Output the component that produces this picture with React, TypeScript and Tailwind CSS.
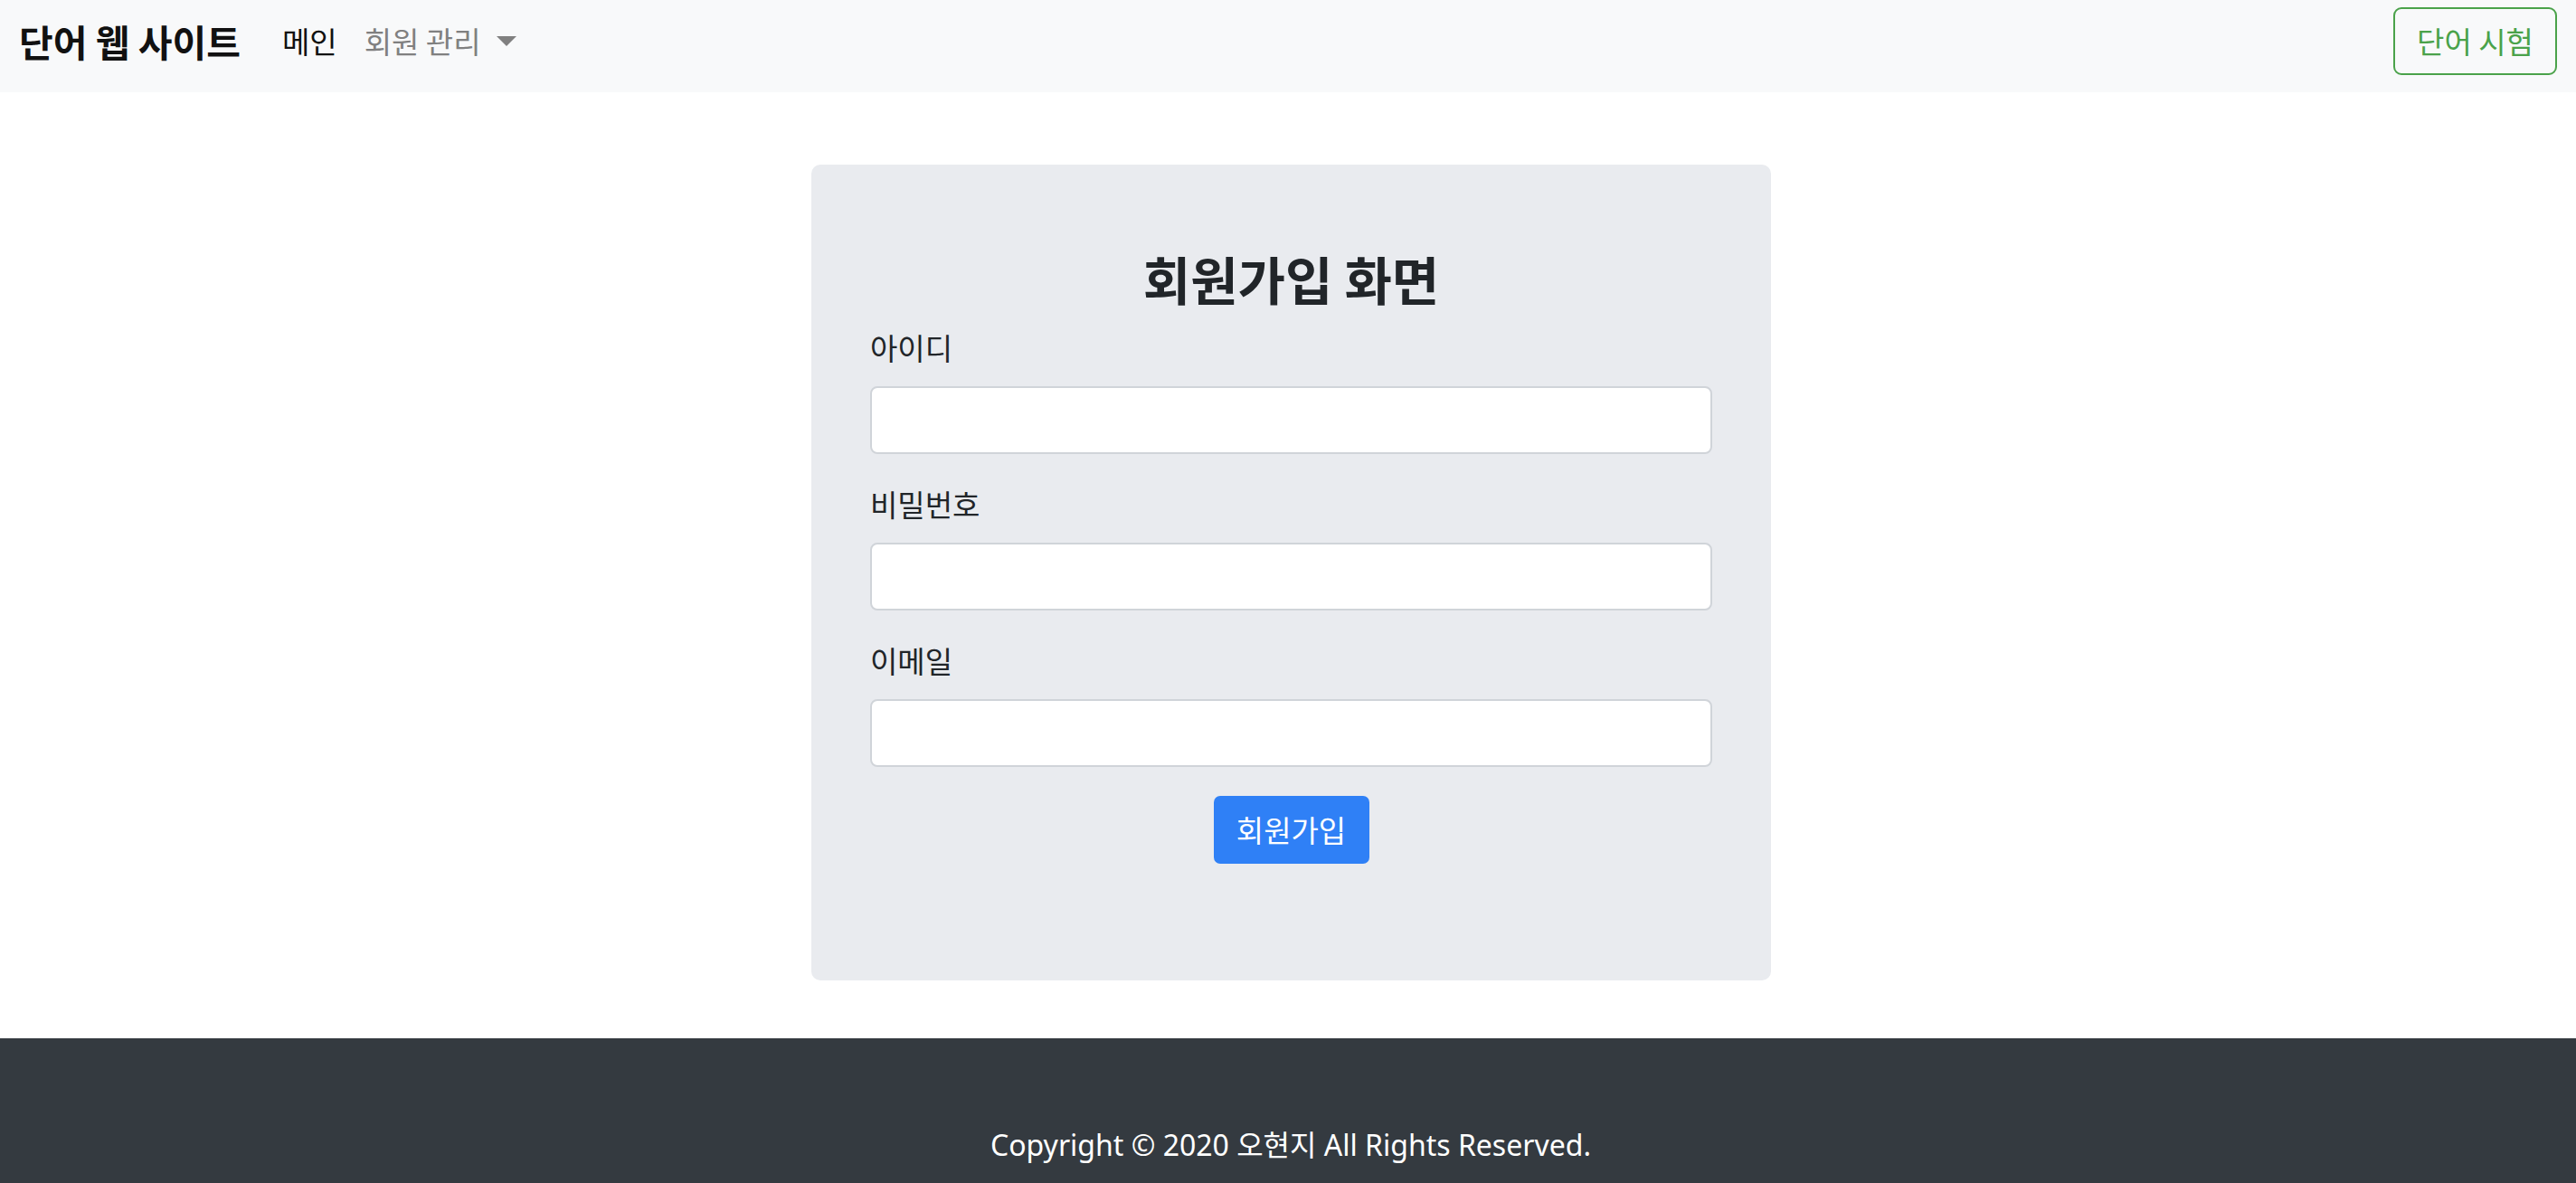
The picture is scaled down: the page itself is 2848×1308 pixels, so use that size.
import React from "react";

const KR = "font-['Noto_Sans_CJK_KR','Noto_Sans',sans-serif]";

function Field({ label, type, last }: { label: string; type: string; last?: boolean }) {
  return (
    <div className={last ? "" : "mb-[34px]"}>
      <label className="mb-[21px] block text-[33px] leading-[43px] text-[#212529]">{label}</label>
      <input
        type={type}
        className="block h-[75px] w-full rounded-[8px] border-2 border-[#d0d4d9] bg-white px-4 text-[33px] outline-none"
      />
    </div>
  );
}

export default function App() {
  return (
    <div className={`${KR} min-h-screen bg-white`}>
      {/* navbar */}
      <nav className="flex items-center justify-between bg-[#f8f9fa] pt-[8px] pb-[19px] pl-[21px] pr-[21px]">
        <div className="flex items-center">
          <span className="mr-[46px] text-[41px] font-bold leading-none text-[#111]">단어 웹 사이트</span>
          <a className="mr-[30px] text-[33px] text-[#111]">메인</a>
          <a className="flex items-center text-[33px] text-[#808080]">
            회원 관리
            <span className="ml-[17px] inline-block h-0 w-0 border-x-[11px] border-t-[11px] border-x-transparent border-t-[#808080]" />
          </a>
        </div>
        <button className="flex h-[75px] w-[181px] items-center justify-center rounded-[9px] border-2 border-[#4aa24a] text-[33px] text-[#4aa24a]">
          단어 시험
        </button>
      </nav>

      {/* card */}
      <main className="pt-[80px] pb-[64px]">
        <div className="mx-auto w-[1068px] pl-[7px]">
          <div className="rounded-[10px] bg-[#e9ebef] px-[65px] pt-[95px] pb-[129px]">
            <h2 className="mb-[26px] text-center text-[57px] font-bold leading-[60px] text-[#212529]">회원가입 화면</h2>
            <Field label="아이디" type="text" />
            <Field label="비밀번호" type="password" />
            <Field label="이메일" type="email" last />
            <div className="mt-[32px] flex justify-center">
              <button className="flex h-[75px] w-[172px] items-center justify-center rounded-[7px] bg-[#2f80f6] text-[33px] text-white">
                회원가입
              </button>
            </div>
          </div>
        </div>
      </main>

      {/* footer */}
      <footer className="bg-[#343a40] pt-[96px] pb-[97px] text-center">
        <p className="pl-[6px] font-['Noto_Sans','Noto_Sans_CJK_KR',sans-serif] text-[32px] leading-[43px] text-white">
          Copyright © 2020 오현지 All Rights Reserved.
        </p>
      </footer>
    </div>
  );
}
